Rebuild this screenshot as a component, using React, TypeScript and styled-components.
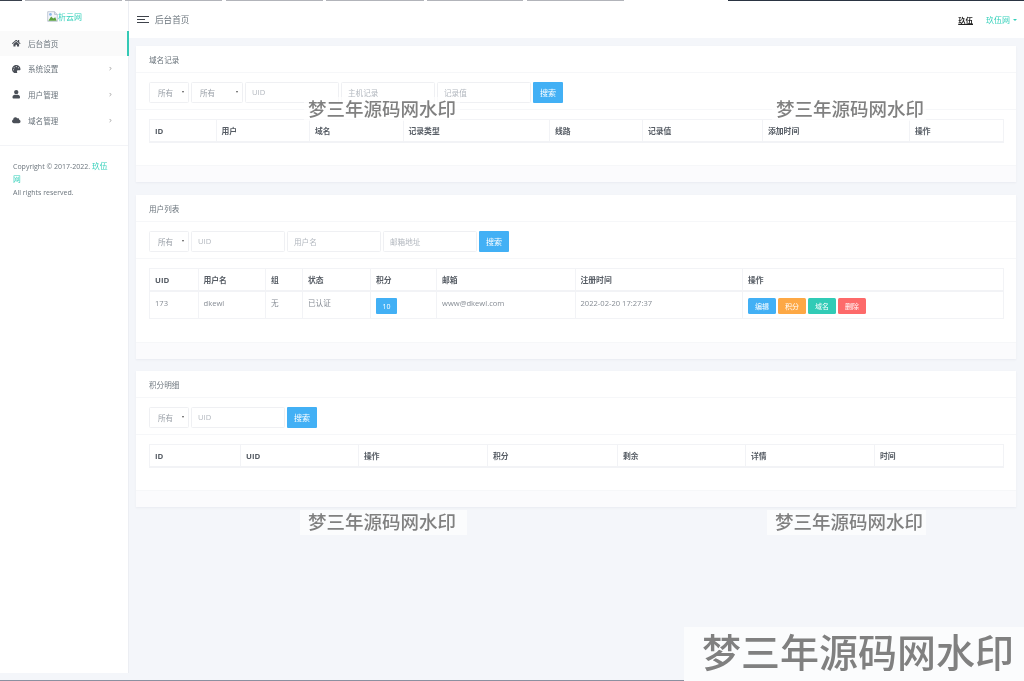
import React from "react";
import styled, { createGlobalStyle } from "styled-components";
import { FaHome, FaPalette, FaUser, FaCloud } from "react-icons/fa";
import { ChevronRight } from "lucide-react";

const FONT = `"Open Sans", "Noto Sans CJK SC", "Liberation Sans", sans-serif`;

const GlobalStyle = createGlobalStyle`
  html, body {
    margin: 0;
    padding: 0;
    height: 681px;
    overflow: hidden;
    background: #f4f6fa;
    font-family: ${FONT};
    color: #6c757d;
  }
  * { box-sizing: border-box; }
`;

// The reference is a downscaled capture, so everything is a touch soft
const Page = styled.div`
  position: relative;
  display: flex;
  align-items: flex-start;
  width: 1024px;
  height: 681px;
  overflow: hidden;
  background: #f4f6fa;
  filter: blur(0.3px);
`;

// Top strip left over from the capture
const TopStrip = styled.div`
  position: absolute;
  top: 0;
  left: 0;
  right: 0;
  height: 1px;
  display: flex;
  z-index: 5;
`;

const StripPart = styled.i<{ $w: number; $c: string }>`
  display: block;
  width: ${(p) => p.$w}px;
  background: ${(p) => p.$c};
`;

const BottomStrip = styled.div`
  position: absolute;
  left: 0;
  bottom: 0;
  width: 684px;
  height: 1px;
  background: #8b90a0;
  z-index: 5;
`;

const Sidebar = styled.aside`
  width: 129px;
  height: 673px;
  flex-shrink: 0;
  background: #fff;
  border-right: 1px solid #eceef3;
`;

const Logo = styled.div`
  height: 30px;
  padding: 2px 0 0 1px;
  display: flex;
  align-items: center;
  justify-content: center;
  font-size: 8px;
  color: #34d0ba;
`;

const Menu = styled.nav`
  padding: 0.5px 0 12px;
  border-bottom: 1px solid #f3f4f7;
`;

const MenuItem = styled.div<{ $active?: boolean }>`
  height: 25.6px;
  display: flex;
  align-items: center;
  padding: 0 15px 0 12px;
  font-size: 7.6px;
  color: #6c757d;
  background: ${(p) => (p.$active ? "#fafafa" : "#fff")};
  border-right: ${(p) => (p.$active ? "2px solid #34c9b5" : "0")};
  margin-right: ${(p) => (p.$active ? "-1px" : "0")};
`;

const MenuIcon = styled.span`
  width: 16px;
  display: flex;
  color: #4a4f57;
  font-size: 8.5px;
`;

const MenuLabel = styled.span`
  flex: 1;
`;

const Copy = styled.div`
  padding: 14px 13px;
  font-size: 7px;
  line-height: 13px;
  color: #6c757d;

  a {
    color: #34d0ba;
    font-size: 7.8px;
  }
`;

const Main = styled.main`
  flex: 1;
  min-width: 0;
`;

const Topbar = styled.header`
  height: 38px;
  background: #fff;
  display: flex;
  align-items: center;
  padding: 1px 7px 0 8px;
  font-size: 8.6px;
  color: #6c757d;
`;

const Burger = styled.div`
  width: 12px;
  height: 7px;
  margin-right: 6px;
  border-top: 1px solid #3e434b;
  border-bottom: 1px solid #3e434b;
  position: relative;

  &::after {
    content: "";
    position: absolute;
    left: 0;
    top: 2px;
    width: 8px;
    height: 1px;
    background: #3e434b;
  }
`;

const TopTitle = styled.span`
  flex: 1;
`;

const Nick = styled.span`
  font-size: 7.4px;
  font-weight: 700;
  color: #222;
  margin-right: 13px;
  text-decoration: underline;
  text-underline-offset: 1px;
`;

const UserMenu = styled.span`
  font-size: 8px;
  color: #34d0ba;
  display: flex;
  align-items: center;
  gap: 3px;

  &::after {
    content: "";
    border-left: 2.5px solid transparent;
    border-right: 2.5px solid transparent;
    border-top: 2.5px solid #34d0ba;
  }
`;

const Content = styled.div`
  display: flex;
  flex-direction: column;
  padding: 8px 8px 0 7px;
`;

const Card = styled.section<{ $gap: number }>`
  background: #fff;
  margin-bottom: ${(p) => p.$gap}px;
  box-shadow: 0 1px 2px rgba(60, 70, 100, 0.06);
`;

const CardHead = styled.div`
  height: 27px;
  padding: 0 13px;
  display: flex;
  align-items: center;
  font-size: 7.6px;
  color: #6c757d;
  border-bottom: 1px solid #f6f7f9;
`;

const Filter = styled.div`
  height: 37px;
  padding: 9px 13px 0;
  display: flex;
  gap: 2px;
  border-bottom: 1px solid #f6f7f9;
`;

const FilterSelect = styled.div<{ $w: number }>`
  position: relative;
  width: ${(p) => p.$w}px;
  height: 20.5px;
  padding-left: 8px;
  display: flex;
  align-items: center;
  font-size: 7.6px;
  color: #9aa0a8;
  border: 1px solid #eff0f3;
  border-radius: 1.5px;

  &::after {
    content: "";
    position: absolute;
    right: 4px;
    top: 8px;
    border-left: 1.8px solid transparent;
    border-right: 1.8px solid transparent;
    border-top: 2.8px solid #555;
  }
`;

const FilterInput = styled.div`
  width: 94px;
  height: 20.5px;
  padding-left: 6px;
  display: flex;
  align-items: center;
  font-size: 7.6px;
  color: #b3b8bf;
  border: 1px solid #eff0f3;
  border-radius: 1.5px;
`;

const SearchButton = styled.div`
  width: 30px;
  height: 20.5px;
  display: flex;
  align-items: center;
  justify-content: center;
  font-size: 8px;
  color: #fff;
  background: #42b0f5;
  border-radius: 1px;
`;

const TableWrap = styled.div<{ $h: number }>`
  height: ${(p) => p.$h}px;
  padding: 9px 13px 0;
  border-bottom: 1px solid #f6f7f9;
`;

const Grid = styled.table`
  width: 854px;
  table-layout: fixed;
  border-collapse: collapse;

  th, td {
    border: 1px solid #f2f3f6;
    padding: 0 5px;
    text-align: left;
    overflow: hidden;
    white-space: nowrap;
  }

  th {
    height: 22.5px;
    font-size: 7.8px;
    font-weight: 700;
    color: #565c64;
    border-bottom-width: 2px;
  }

  td {
    height: 27.5px;
    padding-top: 6px;
    vertical-align: top;
    font-size: 7.6px;
    line-height: 11px;
    color: #868c94;
  }
`;

const CardFoot = styled.div`
  height: 16px;
  background: #fbfbfd;
`;

const ScoreTag = styled.span`
  display: block;
  width: 21px;
  height: 16px;
  line-height: 17px;
  text-align: center;
  font-size: 7px;
  color: #fff;
  background: #42b0f5;
  border-radius: 1px;
`;

const Actions = styled.div`
  display: flex;
  gap: 2px;
`;

const ActionButton = styled.span<{ $c: string }>`
  width: 28px;
  height: 16px;
  display: flex;
  align-items: center;
  justify-content: center;
  font-size: 7px;
  color: #fff;
  background: ${(p) => p.$c};
  border-radius: 1.5px;
`;

// Stamped watermarks lying over the page
const Mark = styled.div<{ $x: number; $y: number; $w: number; $h: number; $size: number; $pl: number; $pb: number }>`
  position: absolute;
  left: ${(p) => p.$x}px;
  top: ${(p) => p.$y}px;
  width: ${(p) => p.$w}px;
  height: ${(p) => p.$h}px;
  padding: 0 0 ${(p) => p.$pb}px ${(p) => p.$pl}px;
  display: flex;
  align-items: center;
  font-size: ${(p) => p.$size}px;
  font-weight: 500;
  white-space: nowrap;
  color: #808080;
  background: rgba(255, 255, 255, 0.66);
  font-family: "Noto Sans CJK SC", sans-serif;
  z-index: 4;
`;

const BrokenImage = () => (
  <svg width="11" height="11" viewBox="0 0 16 16">
    <path d="M1 1h10l4 4v10H1z" fill="#f4f6fb" stroke="#a9b4c4" strokeWidth="1" />
    <path d="M11 1v4h4" fill="#dfe5ee" stroke="#a9b4c4" strokeWidth="1" />
    <path d="M2 14l4-6 3 3 3-2 2 5z" fill="#5aa13c" />
    <circle cx="5" cy="5" r="2" fill="#8fb7ea" />
  </svg>
);

const stripParts: [number, string][] = [
  [22, "#39414d"], [3, "#fff"], [97, "#b2b4ba"], [3, "#fff"], [97, "#b2b4ba"], [4, "#fff"],
  [97, "#b2b4ba"], [3, "#fff"], [98, "#b2b4ba"], [3, "#fff"], [96, "#b2b4ba"], [4, "#fff"],
  [97, "#b2b4ba"], [104, "#fff"], [296, "#2a3442"],
];

const menu = [
  { icon: <FaHome />, label: "后台首页", active: true },
  { icon: <FaPalette />, label: "系统设置", arrow: true },
  { icon: <FaUser />, label: "用户管理", arrow: true },
  { icon: <FaCloud />, label: "域名管理", arrow: true },
];

type Col = { title: string; w: number };

const domainCols: Col[] = [
  { title: "ID", w: 66.5 }, { title: "用户", w: 93.5 }, { title: "域名", w: 93.5 }, { title: "记录类型", w: 146.5 },
  { title: "线路", w: 93 }, { title: "记录值", w: 120 }, { title: "添加时间", w: 147 }, { title: "操作", w: 94 },
];

const userCols: Col[] = [
  { title: "UID", w: 48.5 }, { title: "用户名", w: 67.5 }, { title: "组", w: 37 }, { title: "状态", w: 68 },
  { title: "积分", w: 66 }, { title: "邮箱", w: 138.5 }, { title: "注册时间", w: 167.5 }, { title: "操作", w: 261 },
];

const pointCols: Col[] = [
  { title: "ID", w: 91 }, { title: "UID", w: 118 }, { title: "操作", w: 129 }, { title: "积分", w: 130 },
  { title: "剩余", w: 128 }, { title: "详情", w: 129 }, { title: "时间", w: 129 },
];

const Head = ({ cols }: { cols: Col[] }) => (
  <>
    <colgroup>
      {cols.map((c) => (
        <col key={c.title} style={{ width: c.w }} />
      ))}
    </colgroup>
    <thead>
      <tr>
        {cols.map((c) => (
          <th key={c.title}>{c.title}</th>
        ))}
      </tr>
    </thead>
  </>
);

export default function App() {
  return (
    <Page>
      <GlobalStyle />
      <TopStrip>
        {stripParts.map(([w, c], i) => (
          <StripPart key={i} $w={w} $c={c} />
        ))}
      </TopStrip>

      <Sidebar>
        <Logo>
          <BrokenImage />
          析云网
        </Logo>
        <Menu>
          {menu.map((m) => (
            <MenuItem key={m.label} $active={m.active}>
              <MenuIcon>{m.icon}</MenuIcon>
              <MenuLabel>{m.label}</MenuLabel>
              {m.arrow && <ChevronRight size={5} strokeWidth={3} color="#777" />}
            </MenuItem>
          ))}
        </Menu>
        <Copy>
          Copyright © 2017-2022. <a>玖伍网</a>
          <br />
          All rights reserved.
        </Copy>
      </Sidebar>

      <Main>
        <Topbar>
          <Burger />
          <TopTitle>后台首页</TopTitle>
          <Nick>玖伍</Nick>
          <UserMenu>玖伍网</UserMenu>
        </Topbar>
        <Content>
          <Card $gap={13}>
            <CardHead>域名记录</CardHead>
            <Filter>
              <FilterSelect $w={40}>所有</FilterSelect>
              <FilterSelect $w={52}>所有</FilterSelect>
              <FilterInput>UID</FilterInput>
              <FilterInput>主机记录</FilterInput>
              <FilterInput>记录值</FilterInput>
              <SearchButton>搜索</SearchButton>
            </Filter>
            <TableWrap $h={56}>
              <Grid>
                <Head cols={domainCols} />
              </Grid>
            </TableWrap>
            <CardFoot />
          </Card>

          <Card $gap={12}>
            <CardHead>用户列表</CardHead>
            <Filter>
              <FilterSelect $w={40}>所有</FilterSelect>
              <FilterInput>UID</FilterInput>
              <FilterInput>用户名</FilterInput>
              <FilterInput>邮箱地址</FilterInput>
              <SearchButton>搜索</SearchButton>
            </Filter>
            <TableWrap $h={84}>
              <Grid>
                <Head cols={userCols} />
                <tbody>
                  <tr>
                    <td>173</td>
                    <td>dkewl</td>
                    <td>无</td>
                    <td>已认证</td>
                    <td>
                      <ScoreTag>10</ScoreTag>
                    </td>
                    <td>www@dkewl.com</td>
                    <td>2022-02-20 17:27:37</td>
                    <td>
                      <Actions>
                        <ActionButton $c="#42b0f5">编辑</ActionButton>
                        <ActionButton $c="#fda845">积分</ActionButton>
                        <ActionButton $c="#31cbb6">域名</ActionButton>
                        <ActionButton $c="#fd6a6a">删除</ActionButton>
                      </Actions>
                    </td>
                  </tr>
                </tbody>
              </Grid>
            </TableWrap>
            <CardFoot />
          </Card>

          <Card $gap={0}>
            <CardHead>积分明细</CardHead>
            <Filter>
              <FilterSelect $w={40}>所有</FilterSelect>
              <FilterInput>UID</FilterInput>
              <SearchButton>搜索</SearchButton>
            </Filter>
            <TableWrap $h={56}>
              <Grid>
                <Head cols={pointCols} />
              </Grid>
            </TableWrap>
            <CardFoot />
          </Card>
        </Content>
      </Main>

      <Mark $x={304} $y={97} $w={156} $h={24} $size={18.5} $pl={4} $pb={3}>梦三年源码网水印</Mark>
      <Mark $x={772} $y={97} $w={154} $h={24} $size={18.5} $pl={4} $pb={3}>梦三年源码网水印</Mark>
      <Mark $x={300} $y={510} $w={167} $h={25} $size={18.5} $pl={8} $pb={3}>梦三年源码网水印</Mark>
      <Mark $x={767} $y={510} $w={159} $h={25} $size={18.5} $pl={8} $pb={3}>梦三年源码网水印</Mark>
      <Mark $x={684} $y={627} $w={340} $h={54} $size={39} $pl={18} $pb={8}>梦三年源码网水印</Mark>
      <BottomStrip />
    </Page>
  );
}
